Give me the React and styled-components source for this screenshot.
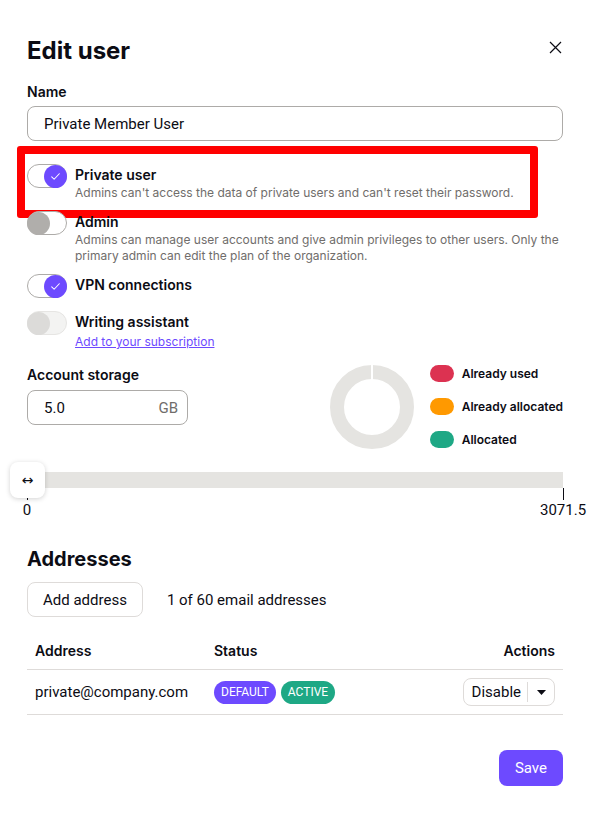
import React, { useState } from 'react';
import styled, { createGlobalStyle, css } from 'styled-components';

const colors = {
  text: '#0c0c14',
  weak: '#706d6b',
  border: '#adaba8',
  line: '#dedbd9',
  primary: '#6d4aff',
  success: '#1ea885',
  danger: '#dc3251',
  warning: '#ff9900',
  track: '#e5e4e1',
};

const GlobalStyle = createGlobalStyle`
  body {
    margin: 0;
    background: #fff;
    color: ${colors.text};
    font-family: Inter, "Noto Sans", sans-serif;
  }
  * { box-sizing: border-box; }
`;

const Modal = styled.div`
  width: 592px;
  padding: 36px 29px 30px 27px;
  display: flex;
  flex-direction: column;
`;

const Header = styled.div`
  display: flex;
  justify-content: space-between;
  align-items: center;
`;

const Title = styled.h1`
  margin: 0;
  font-size: 24px;
  line-height: 30px;
  font-weight: 700;
`;

const CloseButton = styled.button`
  border: 0;
  background: none;
  padding: 0;
  width: 16px;
  height: 16px;
  margin-top: -7px;
  display: flex;
  align-items: center;
  justify-content: center;
  color: ${colors.text};
`;

const Label = styled.label`
  display: block;
  font-size: 14px;
  line-height: 20px;
  font-weight: 600;
  margin: ${({ $top }) => $top ?? 16}px 0 ${({ $bottom }) => $bottom ?? 4}px;
`;

const InputBox = styled.div`
  display: flex;
  align-items: center;
  height: 35px;
  width: ${({ $width }) => ($width ? `${$width}px` : '100%')};
  border: 1px solid ${colors.border};
  border-radius: 8px;
  padding: 0 9px 0 16px;
  font-family: Roboto, "Liberation Sans", sans-serif;
  font-size: 15px;
`;

const InputValue = styled.span`
  flex: 1;
`;

const Suffix = styled.span`
  color: ${colors.weak};
`;

const ToggleList = styled.div`
  display: flex;
  flex-direction: column;
  gap: 10px;
  margin-top: 23px;
`;

const ToggleRow = styled.div`
  position: relative;
  display: flex;
  align-items: flex-start;
  gap: 8px;
  min-height: 27px;
`;

const Track = styled.span`
  flex: none;
  width: 40px;
  height: 24px;
  border-radius: 12px;
  border: 1px solid ${colors.border};
  background: #fff;
  display: flex;
  align-items: center;
  justify-content: ${({ $on }) => ($on ? 'flex-end' : 'flex-start')};
  ${({ $disabled }) =>
    $disabled &&
    css`
      border-color: #e6e5e3;
      background: #f3f3f2;
    `}
`;

const Thumb = styled.span`
  width: 23px;
  height: 23px;
  margin: 0 -1px;
  border-radius: 50%;
  display: flex;
  align-items: center;
  justify-content: center;
  background: ${({ $on, $disabled }) =>
    $on ? colors.primary : $disabled ? '#dcdbd9' : '#b0aeab'};
`;

const ToggleText = styled.div`
  padding-top: 1px;
  display: flex;
  flex-direction: column;
`;

const ToggleLabel = styled.span`
  font-size: 14px;
  line-height: 20px;
  font-weight: 600;
`;

const Hint = styled.span`
  font-size: 12px;
  line-height: 16px;
  color: ${colors.weak};
`;

const Link = styled.a`
  font-size: 12px;
  line-height: 17px;
  margin-top: 1px;
  color: ${colors.primary};
  text-decoration: underline;
`;

const Highlight = styled.div`
  position: absolute;
  left: -10px;
  top: -18px;
  width: 521px;
  height: 72px;
  border: 8px solid #ff0000;
  border-radius: 3px;
  pointer-events: none;
`;

const StorageRow = styled.div`
  display: flex;
  justify-content: space-between;
  align-items: flex-start;
  margin-top: 15px;
`;

const ChartGroup = styled.div`
  display: flex;
  gap: 16px;
  align-items: flex-start;
`;

const Legend = styled.ul`
  list-style: none;
  margin: 0;
  padding: 0;
  display: flex;
  flex-direction: column;
  gap: 16px;
`;

const LegendItem = styled.li`
  display: flex;
  align-items: center;
  gap: 8px;
  font-size: 12px;
  line-height: 17px;
  font-weight: 600;
`;

const Pill = styled.span`
  width: 24px;
  height: 17px;
  border-radius: 9px;
  background: ${({ $color }) => $color};
`;

const Slider = styled.div`
  position: relative;
  margin-top: 23px;
  height: 16px;
  background: ${colors.track};
`;

const Handle = styled.div`
  position: absolute;
  left: -17px;
  top: -10px;
  width: 35px;
  height: 36px;
  border-radius: 8px;
  background: #fff;
  box-shadow: 0 1px 5px rgba(0, 0, 0, 0.18);
  display: flex;
  align-items: center;
  justify-content: center;
  font-size: 14px;
  font-family: "DejaVu Sans", sans-serif;
`;

const Scale = styled.div`
  display: flex;
  justify-content: space-between;
`;

const Mark = styled.div`
  width: 0;
  display: flex;
  flex-direction: column;
  align-items: center;
`;

const Tick = styled.span`
  width: 1px;
  height: 12px;
  background: ${colors.text};
`;

const MarkLabel = styled.span`
  white-space: nowrap;
  font-family: Roboto, "Liberation Sans", sans-serif;
  font-size: 15px;
  line-height: 20px;
`;

const SectionTitle = styled.h2`
  margin: 27px 0 0;
  font-size: 20px;
  line-height: 24px;
  font-weight: 700;
`;

const Toolbar = styled.div`
  display: flex;
  align-items: center;
  gap: 24px;
  margin-top: 11px;
  font-family: Roboto, "Liberation Sans", sans-serif;
  font-size: 15px;
`;

const Button = styled.button`
  height: ${({ $height }) => $height || 35}px;
  padding: 0 ${({ $pad }) => $pad ?? 16}px;
  border-radius: 8px;
  font-family: Roboto, "Liberation Sans", sans-serif;
  font-size: 15px;
  cursor: pointer;
  ${({ $primary }) =>
    $primary
      ? css`
          border: 0;
          background: ${colors.primary};
          color: #fff;
        `
      : css`
          border: 1px solid ${colors.line};
          background: #fff;
          color: ${colors.text};
        `}
`;

const Table = styled.table`
  width: 100%;
  border-collapse: collapse;
  margin-top: 16px;
`;

const Th = styled.th`
  text-align: ${({ $right }) => ($right ? 'right' : 'left')};
  font-size: 14px;
  line-height: 20px;
  font-weight: 600;
  padding: 8px;
  border-bottom: 1px solid ${colors.line};
  width: ${({ $width }) => ($width ? `${$width}px` : 'auto')};
`;

const Td = styled.td`
  text-align: ${({ $right }) => ($right ? 'right' : 'left')};
  padding: 8px;
  height: 45px;
  border-bottom: 1px solid ${colors.line};
  font-family: Roboto, "Liberation Sans", sans-serif;
  font-size: 15px;
`;

const Badges = styled.div`
  display: flex;
  gap: 5px;
`;

const Badge = styled.span`
  display: inline-flex;
  align-items: center;
  height: 23px;
  padding: 0 7px;
  border-radius: 12px;
  background: ${({ $color }) => $color};
  color: #fff;
  font-family: Roboto, "Liberation Sans", sans-serif;
  font-size: 12px;
`;

const SplitButton = styled.div`
  display: inline-flex;
  align-items: center;
  height: 28px;
  border: 1px solid ${colors.line};
  border-radius: 8px;
  font-family: Roboto, "Liberation Sans", sans-serif;
  font-size: 15px;
`;

const SplitMain = styled.span`
  padding: 0 6px 0 8px;
  border-right: 1px solid ${colors.line};
  line-height: 20px;
`;

const SplitCaret = styled.span`
  width: 26px;
  display: flex;
  justify-content: center;
`;

const Footer = styled.div`
  display: flex;
  justify-content: flex-end;
  margin-top: 35px;
`;

const Check = () => (
  <svg width="11" height="11" viewBox="0 0 16 16" fill="none">
    <path d="M2.5 8.5l3.5 3.5 7.5-8" stroke="#fff" strokeWidth="1.5" strokeLinecap="round" strokeLinejoin="round" />
  </svg>
);

const Toggle = ({ on, disabled }) => (
  <Track $on={on} $disabled={disabled}>
    <Thumb $on={on} $disabled={disabled}>{on && <Check />}</Thumb>
  </Track>
);

const Donut = () => (
  <svg width="84" height="84" viewBox="0 0 84 84">
    <circle cx="42" cy="42" r="35" fill="none" stroke={colors.track} strokeWidth="14" />
    <rect x="41" y="0" width="2" height="15" fill="#fff" />
  </svg>
);

const toggles = [
  { key: 'private', label: 'Private user', on: true, hint: "Admins can't access the data of private users and can't reset their password.", highlight: true },
  { key: 'admin', label: 'Admin', on: false, hint: 'Admins can manage user accounts and give admin privileges to other users. Only the primary admin can edit the plan of the organization.' },
  { key: 'vpn', label: 'VPN connections', on: true },
  { key: 'writing', label: 'Writing assistant', on: false, disabled: true, link: 'Add to your subscription' },
];

const legend = [
  { label: 'Already used', color: colors.danger },
  { label: 'Already allocated', color: colors.warning },
  { label: 'Allocated', color: colors.success },
];

export default function App() {
  const [name] = useState('Private Member User');

  return (
    <Modal>
      <GlobalStyle />
      <Header>
        <Title>Edit user</Title>
        <CloseButton aria-label="Close">
          <svg width="13" height="13" viewBox="0 0 13 13">
            <path d="M1 1l11 11M12 1L1 12" stroke={colors.text} strokeWidth="1.2" />
          </svg>
        </CloseButton>
      </Header>

      <Label>Name</Label>
      <InputBox>
        <InputValue>{name}</InputValue>
      </InputBox>

      <ToggleList>
        {toggles.map((t) => (
          <ToggleRow key={t.key}>
            <Toggle on={t.on} disabled={t.disabled} />
            <ToggleText>
              <ToggleLabel>{t.label}</ToggleLabel>
              {t.hint && <Hint>{t.hint}</Hint>}
              {t.link && <Link href="#">{t.link}</Link>}
            </ToggleText>
            {t.highlight && <Highlight />}
          </ToggleRow>
        ))}
      </ToggleList>

      <StorageRow>
        <div>
          <Label $top={0} $bottom={5}>Account storage</Label>
          <InputBox $width={161}>
            <InputValue>5.0</InputValue>
            <Suffix>GB</Suffix>
          </InputBox>
        </div>
        <ChartGroup>
          <Donut />
          <Legend>
            {legend.map((l) => (
              <LegendItem key={l.label}>
                <Pill $color={l.color} />
                {l.label}
              </LegendItem>
            ))}
          </Legend>
        </ChartGroup>
      </StorageRow>

      <Slider>
        <Handle>↔</Handle>
      </Slider>
      <Scale>
        <Mark>
          <Tick />
          <MarkLabel>0</MarkLabel>
        </Mark>
        <Mark>
          <Tick />
          <MarkLabel>3071.5</MarkLabel>
        </Mark>
      </Scale>

      <SectionTitle>Addresses</SectionTitle>
      <Toolbar>
        <Button $pad={15}>Add address</Button>
        <span>1 of 60 email addresses</span>
      </Toolbar>

      <Table>
        <thead>
          <tr>
            <Th $width={179}>Address</Th>
            <Th>Status</Th>
            <Th $right>Actions</Th>
          </tr>
        </thead>
        <tbody>
          <tr>
            <Td>private@company.com</Td>
            <Td>
              <Badges>
                <Badge $color={colors.primary}>DEFAULT</Badge>
                <Badge $color={colors.success}>ACTIVE</Badge>
              </Badges>
            </Td>
            <Td $right>
              <SplitButton>
                <SplitMain>Disable</SplitMain>
                <SplitCaret>
                  <svg width="9" height="5" viewBox="0 0 9 5">
                    <path d="M0 0h9L4.5 5z" fill={colors.text} />
                  </svg>
                </SplitCaret>
              </SplitButton>
            </Td>
          </tr>
        </tbody>
      </Table>

      <Footer>
        <Button $primary $height={36}>Save</Button>
      </Footer>
    </Modal>
  );
}
